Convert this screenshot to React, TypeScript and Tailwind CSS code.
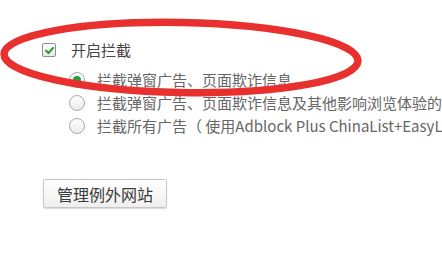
const font = { fontFamily: '"Noto Sans CJK SC", "Noto Sans", sans-serif' };

function Checkbox() {
	return (
		<span className="flex h-[14px] w-[14px] items-center justify-center rounded-[2px] border border-[#8f8f8f] bg-gradient-to-b from-white to-[#e8e8e8]">
			<svg viewBox="0 0 12 12" className="h-[11px] w-[11px]" aria-hidden="true">
				<path d="M2.2 6.2 L4.9 8.8 L9.9 3.2" fill="none" stroke="#1f9a3b" strokeWidth={2.2} strokeLinecap="round" strokeLinejoin="round" />
			</svg>
		</span>
	);
}

function Radio({ checked }: { checked?: boolean }) {
	return (
		<span className="flex h-[16px] w-[16px] shrink-0 items-center justify-center rounded-full border border-[#a9a9a9] bg-gradient-to-b from-white to-[#ececec]">
			{checked && <span className="h-[8px] w-[8px] rounded-full bg-[#22a33a]" />}
		</span>
	);
}

const options = [
	{ label: "拦截弹窗广告、页面欺诈信息", checked: true },
	{ label: "拦截弹窗广告、页面欺诈信息及其他影响浏览体验的广告", checked: false },
	{ label: "拦截所有广告（ 使用Adblock Plus ChinaList+EasyList规则）", checked: false },
];

export default function App() {
	return (
		<div className="relative h-[274px] w-[442px] overflow-hidden bg-white" style={font}>
			<div className="pl-[42px] pt-[43px]">
				<label className="flex h-[14px] items-center gap-[15px]">
					<Checkbox />
					<span className="whitespace-nowrap text-[15px] leading-[14px] text-[#444]">开启拦截</span>
				</label>
				<div className="mt-[11px] pl-[27px]">
					{options.map((o) => (
						<div key={o.label} className="flex h-[23px] items-center gap-[12px]">
							<Radio checked={o.checked} />
							<span className="whitespace-nowrap text-[15px] leading-[23px] text-[#666]">{o.label}</span>
						</div>
					))}
				</div>
				<button
					type="button"
					className="mt-[42px] ml-px flex h-[29px] w-[124px] items-center justify-center rounded-[2px] border border-[#c6c6c6] bg-gradient-to-b from-white to-[#efefef] text-[16px] text-[#3a3a3a] shadow-[0_1px_1px_rgba(0,0,0,0.15)]"
				>
					管理例外网站
				</button>
			</div>
			<svg className="pointer-events-none absolute inset-0" width="442" height="274" aria-hidden="true">
				<ellipse cx="181" cy="57.5" rx="177" ry="35" transform="rotate(1.1 181 57.5)" fill="none" stroke="#e8312f" strokeWidth={7.5} />
			</svg>
		</div>
	);
}
